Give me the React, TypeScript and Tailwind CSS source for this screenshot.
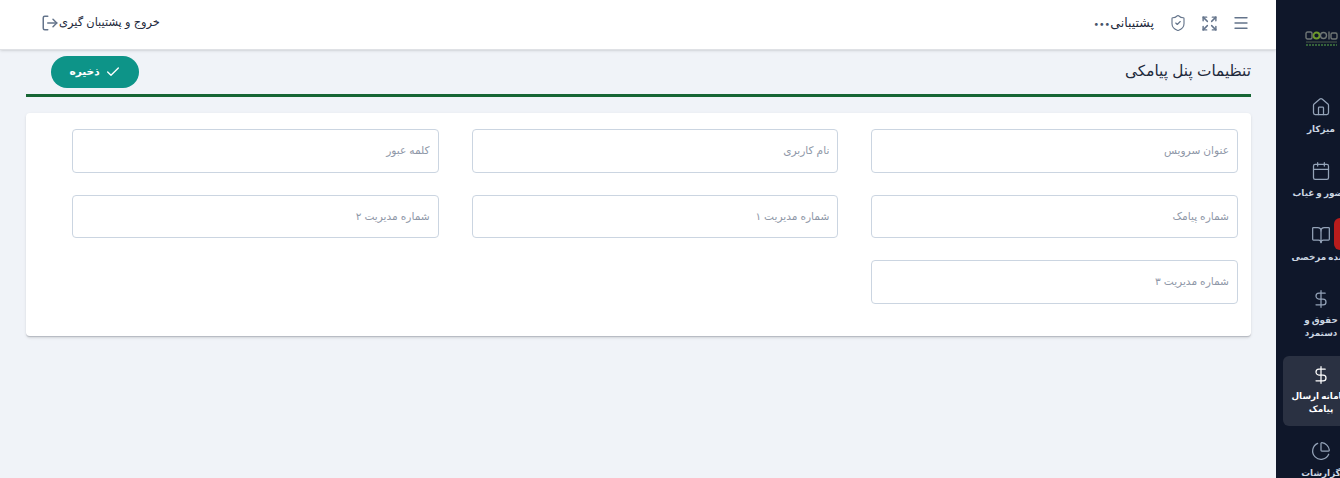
import { Check, Menu, Expand, ShieldCheck, LogOut, House, Calendar, BookOpen, DollarSign, ChartPie } from "lucide-react";

const fields = ["عنوان سرویس", "نام کاربری", "کلمه عبور", "شماره پیامک", "شماره مدیریت ۱", "شماره مدیریت ۲", "شماره مدیریت ۳"];

const navItems = [
  { label: "میزکار", Icon: House, box: "h-[64px]", gap: "mt-[5px]" },
  { label: "حضور و غیاب", Icon: Calendar, box: "h-[64px]", gap: "mt-[5px]" },
  { label: "مانده مرخصی", Icon: BookOpen, box: "h-[64px]", gap: "mt-[5px]" },
  { label: "حقوق و دستمزد", Icon: DollarSign, box: "h-[69px] px-[14px]", gap: "mt-[4px]" },
  { label: "سامانه ارسال پیامک", Icon: DollarSign, box: "h-[70px] mb-[13px]", gap: "mt-[4px]", active: true },
  { label: "گزارشات", Icon: ChartPie, box: "h-[64px]", gap: "mt-[5px]" },
];

function Logo() {
  return (
    <svg width="33" height="16" viewBox="0 0 33 16" fill="none">
      <rect x="1" y="1" width="6" height="7" rx="1.5" stroke="#6f7675" strokeWidth="1.4" />
      <circle cx="11.5" cy="4.5" r="3" stroke="#6f9a2c" strokeWidth="1.8" />
      <circle cx="18.5" cy="4.5" r="3" stroke="#6f7675" strokeWidth="1.4" />
      <path d="M24 0.5v8" stroke="#6f7675" strokeWidth="1.4" />
      <rect x="26" y="2" width="6" height="6" rx="1.5" stroke="#6f7675" strokeWidth="1.4" />
      <path d="M1 11h31" stroke="#4b5a4a" strokeWidth="1" />
      <path d="M1 14h31" stroke="#35623a" strokeWidth="2" strokeDasharray="2 1" />
    </svg>
  );
}

export default function App() {
  return (
    <div dir="ltr" className="flex h-[478px] w-[1340px] overflow-hidden bg-[#f0f3f8] font-['Inter','Noto_Sans','DejaVu_Sans',sans-serif]">
      <div className="w-[1276px] shrink-0">
        <header className="flex h-[50px] items-center justify-between border-b border-[#dfe1e5] bg-white pb-[3px] pl-[41px] pr-[26px] shadow-sm">
          <div className="flex items-center text-[11.4px] text-[#1e293b]">
            <LogOut size={18} strokeWidth={2} className="text-[#64748b]" />
            <span dir="rtl">خروج و پشتیبان گیری</span>
          </div>
          <div className="flex items-center text-[#64748b]">
            <span className="text-[9px] leading-none tracking-[0.5px] text-[#475569]">•••</span>
            <span dir="rtl" className="text-[12.5px] text-[#1e293b]">پشتیبانی</span>
            <ShieldCheck size={18} strokeWidth={1.5} className="ml-[15px]" />
            <Expand size={17} strokeWidth={2} className="ml-[14px]" />
            <Menu size={18} strokeWidth={1.8} className="ml-[14px]" />
          </div>
        </header>
        <main className="pl-[26px] pr-[25px]">
          <div className="flex h-[47px] items-center justify-between border-b-[3px] border-[#166534] pl-[25px] pt-[1px]">
            <button className="mb-[4px] mt-[3px] flex h-[32px] w-[88px] items-center justify-center gap-[5px] rounded-full bg-[#0d9488] text-[10.6px] font-bold text-white">
              <span dir="rtl">ذخیره</span>
              <Check size={16} strokeWidth={2} />
            </button>
            <h1 dir="rtl" className="mb-[3px] text-[15.3px] text-[#1e293b]">تنظیمات پنل پیامکی</h1>
          </div>
          <div className="mt-[16px] grid h-[224px] grid-cols-3 content-start gap-x-[33px] gap-y-[22px] rounded-[4px] border-b border-[#b8bcc4] bg-white pb-[32px] pl-[46px] pr-[13px] pt-[16px] shadow-sm">
            {[fields[2], fields[1], fields[0], fields[5], fields[4], fields[3]].map((f) => (
              <input key={f} dir="rtl" readOnly placeholder={f} className="h-[43.6px] w-full rounded-[4px] border border-[#cbd5e1] bg-white px-[8px] text-[10.6px] outline-none placeholder:text-[#8f98a8]" />
            ))}
            <input dir="rtl" readOnly placeholder={fields[6]} className="col-start-3 h-[43.6px] w-full rounded-[4px] border border-[#cbd5e1] bg-white px-[8px] text-[10.6px] outline-none placeholder:text-[#8f98a8]" />
          </div>
        </main>
      </div>
      <aside className="relative w-[90px] shrink-0 bg-[#0f172a] px-[7px]">
        <div className="flex h-[95px] items-center justify-center pb-[17px]">
          <Logo />
        </div>
        <div className="absolute left-[58px] top-[218px] h-[32px] w-[30px] rounded-l-md bg-[#b91c1c]" />
        <nav className="flex flex-col">
          {navItems.map(({ label, Icon, box, gap, active }) => (
            <div key={label} className={`relative flex w-[76px] shrink-0 flex-col items-center rounded-md pt-[2px] text-center ${box} ${active ? "bg-[#2a3142] text-white" : "text-[#cbd5e1]"}`}>
              <Icon size={20} strokeWidth={1.5} className={active ? "mt-[7px] shrink-0 text-white" : "shrink-0 text-[#94a3b8]"} />
              <span dir="rtl" className={`${gap} text-[8.8px] font-bold leading-[13px]`}>{label}</span>
            </div>
          ))}
        </nav>
      </aside>
    </div>
  );
}
